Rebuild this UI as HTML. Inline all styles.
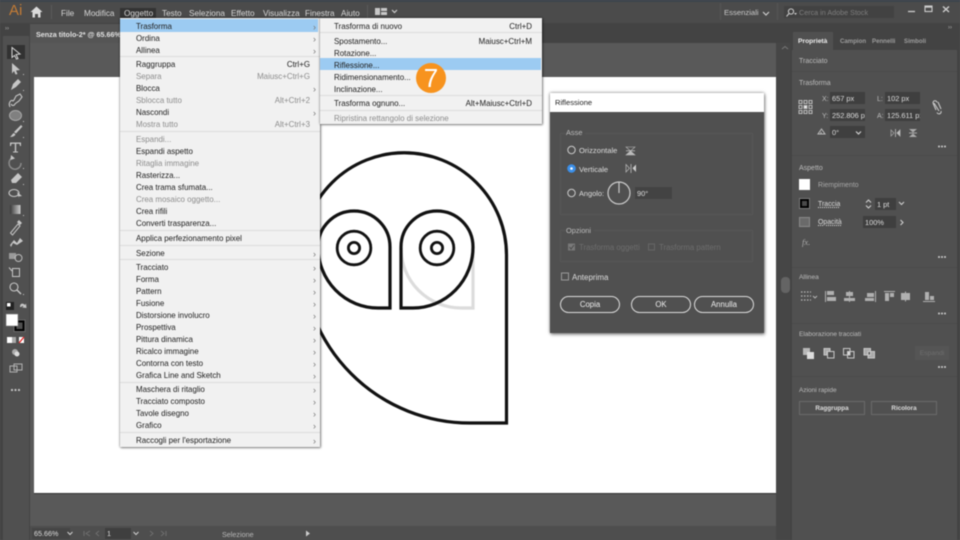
<!DOCTYPE html>
<html lang="it"><head><meta charset="utf-8"><title>Illustrator</title>
<style>
html,body{margin:0;padding:0;background:#535353}
#p{position:relative;width:960px;height:540px;overflow:hidden;background:#595959;font-family:"Liberation Sans",sans-serif;font-size:8.2px;color:#d8d8d8;filter:blur(.4px)}
#p div{position:absolute;white-space:nowrap}
svg{position:absolute;overflow:visible}
.b{line-height:12px;height:12px;margin-top:1px}
.m{left:0;right:0;height:12px;line-height:12px;padding-left:16px;color:#202020;font-size:7.95px;margin-top:1px}
.s .m{padding-left:14px}
.g{color:#8c8c8c!important}
.k{right:10px;top:0}
.a{right:4px;top:0;color:#777;font-size:9px}
.l{left:0;right:0;height:1px;background:#dcdcdc}
.f{background:#3f3f3f;height:12px;line-height:13.5px;padding-left:2px;color:#ddd;overflow:hidden;font-size:7.4px}
.h{color:#bcbcbc;font-size:7px}
.btn{border:1px solid #6a6a6a;height:12px;line-height:13.5px;text-align:center;color:#ddd;font-weight:bold;font-size:6.3px}
.pb{border:1.3px solid #ddd;border-radius:9px;height:15px;line-height:16px;text-align:center;color:#eee;font-size:7.8px}
.sep{left:792px;width:165px;height:1px;background:#4b4b4b}
.d{color:#ddd}
.t{font-weight:bold;color:#9d9d9d;font-size:6.1px}
</style></head><body>
<div id="p">
<!-- chrome -->
<div style="left:0;top:0;width:960px;height:2px;background:#3c444c"></div>
<div style="left:0;top:2px;width:960px;height:21px;background:#4b4b4b"></div>
<div style="left:0;top:23px;width:960px;height:20px;background:#434343"></div>
<div style="left:0;top:23px;width:30px;height:517px;background:#434343"></div>
<div style="left:3px;top:36px;width:26px;height:504px;background:#505050"></div>
<div style="left:30px;top:24px;width:90px;height:19px;background:#555"></div>
<div class="b" style="left:36px;top:28px;font-weight:bold;font-size:7.2px;color:#e2e2e2">Senza titolo-2* @ 65.66%</div>
<div style="left:776px;top:43px;width:14px;height:497px;background:#464646"></div>
<div style="left:790px;top:23px;width:170px;height:517px;background:#434343"></div>
<div style="left:792px;top:32px;width:165px;height:508px;background:#505050"></div>
<div style="left:792px;top:32px;width:165px;height:18px;background:#434343"></div>
<div style="left:793px;top:32px;width:40px;height:18px;background:#505050"></div>
<div style="left:30px;top:526px;width:746px;height:14px;background:#4e4e4e"></div>
<!-- artboard -->
<div style="left:34px;top:77px;width:742px;height:416px;background:#fff;box-shadow:0 1px 0 #333"></div>
<!-- owl -->
<svg style="left:0;top:0" width="960" height="540" fill="none" stroke="#111" stroke-width="3.200">
<path d="M506.500 423H470A168 168 0 0 1 302 255A102.250 102.250 0 0 1 506.500 255Z"/>
<path d="M401 248A60 60 0 0 0 461 308H473V247" stroke="#dcdcdc"/>
<path d="M390 308V247A36 36 0 0 0 318 247A60 61 0 0 0 378 308Z"/>
<path d="M401 308V247A36 36 0 0 1 473 247A60 61 0 0 1 413 308Z"/>
<g stroke-width="2.800"><circle cx="354" cy="248" r="16.800"/><circle cx="354" cy="248" r="5.600"/><circle cx="437" cy="248" r="16.800"/><circle cx="437" cy="248" r="5.600"/></g>
</svg>
<!-- top bar icons -->
<div style="left:9px;top:2px;font-size:15px;color:#c47c35;line-height:18px">Ai</div>
<svg style="left:30px;top:6px" width="13" height="12"><path d="M6.500 .5L.5 6H2.500V11.500H5V8H8V11.500H10.500V6H12.500Z" fill="#dadada"/></svg>
<div style="left:51px;top:5px;width:1px;height:14px;background:#5a5a5a"></div>
<div style="left:120px;top:8px;width:36px;height:10px;background:#333"></div>
<div class="b" style="left:61px;top:7px">File</div>
<div class="b" style="left:84px;top:7px">Modifica</div>
<div class="b" style="left:124px;top:7px">Oggetto</div>
<div class="b" style="left:162px;top:7px">Testo</div>
<div class="b" style="left:189px;top:7px">Seleziona</div>
<div class="b" style="left:231px;top:7px">Effetto</div>
<div class="b" style="left:263px;top:7px">Visualizza</div>
<div class="b" style="left:305px;top:7px">Finestra</div>
<div class="b" style="left:341px;top:7px">Aiuto</div>
<div style="left:367px;top:5px;width:1px;height:14px;background:#5a5a5a"></div>
<svg style="left:375px;top:8px" width="26" height="8"><path d="M0 0H5V7H0ZM6 0H12V3H6ZM6 4H12V7H6Z" fill="#c8c8c8"/><path d="M17 2L19.500 4.500L22 2" fill="none" stroke="#ccc" stroke-width="1.200"/></svg>
<div style="left:720px;top:3px;width:1px;height:17px;background:#565656"></div>
<div class="b" style="left:724px;top:6px;font-size:7.700px;color:#c8c8c8">Essenziali</div>
<svg style="left:762px;top:11px" width="8" height="5"><path d="M1 1L4 4L7 1" fill="none" stroke="#ccc" stroke-width="1.200"/></svg>
<div style="left:777px;top:3px;width:1px;height:17px;background:#565656"></div>
<div style="left:784px;top:6px;width:110px;height:12px;background:#424242"></div>
<svg style="left:786px;top:8px" width="12" height="9" fill="none" stroke="#ccc"><circle cx="5" cy="3.500" r="2.600"/><path d="M3 5.500L.5 8.500"/><path d="M8 5H11L9.500 7Z" fill="#ccc" stroke="none"/></svg>
<div class="b" style="left:799px;top:6px;color:#7e7e7e;font-size:7.200px">Cerca in Adobe Stock</div>
<svg style="left:905px;top:4px" width="50" height="14" fill="none" stroke="#ccc" stroke-width="1.300"><path d="M3 7.500H10"/><rect x="20" y="2" width="7" height="5.500" stroke-width="1.100"/><path d="M20 2.700H27" stroke-width="2"/><path d="M38 2.500L44 8M44 2.500L38 8" stroke-width="1.400"/></svg>
<div style="left:5px;top:26px;font-size:6px;color:#aaa">››</div>
<div style="left:948px;top:25px;font-size:6px;color:#aaa">››</div>
<!-- tools -->
<div style="left:7px;top:45px;width:18px;height:14px;background:#323232"></div>
<svg style="left:0;top:0" width="32" height="400">
<defs><linearGradient id="gr"><stop offset="0" stop-color="#3a3a3a"/><stop offset="1" stop-color="#cfcfcf"/></linearGradient></defs>
<g fill="#c6c6c6" stroke="none">
<path d="M12 47.500L20 54L16 54.500L18 58.500 16.500 59 14.500 55.500 12 57.500Z" fill="none" stroke="#d8d8d8" stroke-width="1"/>
<path d="M12 63L20 70L16 70.500L17.500 74 15.500 74.500 14 71 12 73.500Z"/>
<path d="M11 90L13 84 18 79 21 82 16 87Z"/>
<path d="M10 107C8 103 11 99 13 101L14 100 16 96 20 94 22 97 19 101 16 103 15 104C14 106 12 106 11 104" fill="none" stroke="#c6c6c6" stroke-width="1.100"/>
<ellipse cx="15.500" cy="115.500" rx="6" ry="5" fill="#808080" stroke="#a8a8a8" stroke-width="1"/>
<path d="M21 125L22.500 126.500 16 133.500 14 132ZM14 133L15.500 134.500C14.500 136.500 12 137 10 137C11.500 136 12 134 14 133Z"/>
<path d="M10 142.500H21V146H20L19.500 143.700H16.200V151.500H18V152.500H13V151.500H14.800V143.700H11.500L11 146H10Z"/>
<path d="M21 163A6 6 0 1 1 12 158" fill="none" stroke="#8a8a8a" stroke-width="1.500"/><path d="M11 155L15 158.500 10.500 160Z"/>
<path d="M11 180L18 173 22 177 16 183H12Z"/>
<ellipse cx="14" cy="193" rx="5" ry="3.500" fill="none" stroke="#c6c6c6" stroke-width="1.100"/><path d="M17 192L22 196 18.500 196.500 19 199Z"/>
<rect x="10" y="205" width="10.500" height="9" fill="url(#gr)"/>
<path d="M10.500 233L18 224 20 226 12.500 235Z" fill="none" stroke="#c6c6c6"/><path d="M17 222L19 220 22 223 20 225Z"/>
<path d="M10 245L14 240 17 243 20 238 23 241 17 245 13 243 11 247Z"/>
<rect x="9" y="253" width="7" height="6" fill="#9a9a9a"/><circle cx="18.500" cy="258" r="3.500" fill="none" stroke="#bbb"/>
<path d="M12 268H20V277H12ZM13 269V276H19V269Z"/><path d="M9 267.500L12 271" stroke="#c6c6c6"/>
<circle cx="14" cy="287" r="4" fill="none" stroke="#c6c6c6" stroke-width="1.100"/><path d="M17 290L21 294" stroke="#c6c6c6" stroke-width="1.500"/>
<path d="M23 74h1v1h-1zM23 90h1v1h-1zM23 121h1v1h-1zM23 137h1v1h-1zM23 168h1v1h-1zM23 184h1v1h-1zM23 215h1v1h-1zM23 294h1v1h-1z"/>
<rect x="6" y="302" width="8" height="8" fill="#222" /><rect x="7" y="303" width="3.500" height="3.500" fill="#fff"/>
<path d="M20 307C20 303 23 303 25 305L26 303.500 26.500 308 22 307.500 23.500 306.500C22.500 305.500 21.500 306 21.500 307Z"/>
<rect x="14" y="320" width="11" height="11.500" fill="#000" stroke="#777" stroke-width=".8"/><rect x="16.500" y="322.500" width="6" height="6.500" fill="#4f4f4f"/>
<rect x="6" y="314" width="12" height="12" fill="#fff" stroke="#777" stroke-width=".6"/>
<rect x="7" y="337" width="5" height="6" fill="#fff"/><rect x="12" y="337" width="4" height="6" fill="#aaa"/>
<rect x="19" y="337" width="5" height="6" fill="#fff"/><path d="M19 343L24 337" stroke="#e02020" stroke-width="1.300"/>
<circle cx="15" cy="352" r="3" fill="#aaa"/><circle cx="17" cy="354" r="2.500" fill="#ddd"/>
<path d="M10 366h7v6h-7zM14 364h8v6h-8z" fill="none" stroke="#b0b0b0"/>
<circle cx="12" cy="390" r="1.100"/><circle cx="15.500" cy="390" r="1.100"/><circle cx="19" cy="390" r="1.100"/>
</g></svg>
<!-- status bar -->
<div class="f" style="left:32px;top:528px;width:36px;height:11px;line-height:12.500px;font-size:7.200px;background:#454545">65.66%</div>
<svg style="left:66px;top:530px" width="110" height="8" fill="none" stroke="#cfcfcf"><path d="M1.500 2L4 4.500 6.500 2"/><path d="M18 1V6M24 1L20 3.500 24 6" stroke="#6e6e6e"/><path d="M33 1L30 3.500 33 6" stroke="#6e6e6e"/><path d="M67.500 2L70 4.500 72.500 2"/><path d="M84 1L87 3.500 84 6M95 1L98 3.500 95 6M100 1V6" stroke="#6e6e6e"/></svg>
<div class="f" style="left:105px;top:528px;width:24px;height:11px;line-height:12.500px;font-size:7.200px">1</div>
<div class="b" style="left:222px;top:528px;color:#b8b8b8;font-size:7.200px;line-height:11px">Selezione</div>
<svg style="left:305px;top:530px" width="6" height="7"><path d="M1 .5L5 3.500 1 6.500Z" fill="#ccc"/></svg>
<!-- right panel -->
<div class="b" style="left:798px;top:35px;font-weight:bold;color:#eee;font-size:6.700px">Proprietà</div>
<div class="b t" style="left:840px;top:35px">Campion</div>
<div class="b t" style="left:872px;top:35px">Pennelli</div>
<div class="b t" style="left:904px;top:35px">Simboli</div>
<div class="b h" style="left:799px;top:55px">Tracciato</div>
<div class="sep" style="top:71px"></div>
<div class="b h" style="left:799px;top:77px">Trasforma</div>
<div class="b h" style="left:822px;top:93px">X:</div><div class="f" style="left:830px;top:92px;width:33px">657 px</div>
<div class="b h" style="left:822px;top:110px">Y:</div><div class="f" style="left:830px;top:109px;width:33px">252.806 px</div>
<div class="b h" style="left:877px;top:93px">L:</div><div class="f" style="left:885px;top:92px;width:33px">102 px</div>
<div class="b h" style="left:877px;top:110px">A:</div><div class="f" style="left:885px;top:109px;width:33px">125.611 px</div>
<div class="f" style="left:830px;top:126px;width:21px">0°</div><div class="f" style="left:853px;top:126px;width:10px"></div>
<svg style="left:0;top:0" width="960" height="540" fill="none" stroke="#cfcfcf">
<g stroke-width="1" stroke="#bbb"><rect x="799" y="100.500" width="3" height="3"/><rect x="804" y="100.500" width="3" height="3"/><rect x="809" y="100.500" width="3" height="3"/><rect x="799" y="105.500" width="3" height="3"/><rect x="804" y="105.500" width="3" height="3" fill="#eee"/><rect x="809" y="105.500" width="3" height="3"/><rect x="799" y="110.500" width="3" height="3"/><rect x="804" y="110.500" width="3" height="3"/><rect x="809" y="110.500" width="3" height="3"/></g>
<path d="M934 103L939 111M933 103A2 2 0 0 1 937 102.500M941 111A2 2 0 0 1 937 112.500M933 103L936 110M938 102L941 109" stroke-width="1"/>
<path d="M818 134H825L821.500 129ZM821 134V132" stroke="#bbb"/><path d="M856 131.500L858.500 134 861 131.500" stroke-width="1.200"/>
<path d="M891 130V136L894 133Z" stroke="#aaa" stroke-width=".7"/><path d="M900 130V136L897 133Z" fill="#bbb" stroke="#bbb" stroke-width=".7"/><path d="M895.500 129V137" stroke-width=".7"/>
<path d="M909 129H917L913 132.500ZM909 137H917L913 133.500Z" fill="#aaa" stroke="none"/><path d="M909 133H917" stroke-width=".7"/>
<g fill="#ccc" stroke="none"><circle cx="939" cy="146.500" r="1"/><circle cx="942" cy="146.500" r="1"/><circle cx="945" cy="146.500" r="1"/><circle cx="939" cy="257" r="1"/><circle cx="942" cy="257" r="1"/><circle cx="945" cy="257" r="1"/><circle cx="939" cy="313.500" r="1"/><circle cx="942" cy="313.500" r="1"/><circle cx="945" cy="313.500" r="1"/><circle cx="939" cy="367" r="1"/><circle cx="942" cy="367" r="1"/><circle cx="945" cy="367" r="1"/></g>
<!-- swatches -->
<rect x="799" y="179" width="11" height="11" fill="#fff" stroke="none"/>
<rect x="799.500" y="198.500" width="10" height="10" fill="#000" stroke="#7a7a7a"/><rect x="802" y="201" width="5" height="5" fill="#4a4a4a" stroke="none"/>
<rect x="799.500" y="217.500" width="10" height="9" fill="#6a6a6a" stroke="#8a8a8a"/>
<path d="M866 202.500L868.500 200 871 202.500M866 205.500L868.500 208 871 205.500" stroke-width="1.100"/>
<path d="M899 202L901.500 204.500 904 202" stroke-width="1.100"/><path d="M900.500 220L903 222.500 900.500 225" stroke-width="1.100"/>
<!-- align -->
<g stroke="#b8b8b8" stroke-width="1.200" stroke-dasharray="1.500 1.500"><path d="M801 292H811M801 296H811M801 300H811"/></g>
<path d="M813 296L815 298 817 296" stroke-width=".9" stroke="#bbb"/>
<g fill="#b0b0b0" stroke="none">
<path d="M825 291H826V302H825ZM827 291H834V295H827ZM827 297H836V301H827Z"/>
<path d="M849 291H850V302H849ZM846 292H853V296H846ZM844 298H855V301H844Z"/>
<path d="M875 291H876V302H875ZM867 293H874V297H867ZM865 298H874V301H865Z"/>
<path d="M884 291H895V292H884ZM885 293H889V301H885ZM890 293H894V297H890Z"/>
<path d="M905 291.500H906V301.500H905ZM906 293H910V300H906ZM905 293H901V300H905Z"/>
<path d="M923 301H935V302H923ZM925 292H929V300H925ZM930 296H934V300H930Z"/>
</g>
<!-- pathfinder -->
<g fill="#b8b8b8" stroke="none"><rect x="803" y="348" width="7" height="7"/><rect x="807" y="352" width="7" height="7" fill="#ddd"/></g>
<g stroke="#c8c8c8" stroke-width="1"><path d="M824 348.500H830V351.500H827V355H824Z" fill="#aaa"/><rect x="827.500" y="351.500" width="6.500" height="6.500"/>
<rect x="843.500" y="348.500" width="6.500" height="6.500"/><rect x="847.500" y="351.500" width="6.500" height="6.500"/><rect x="847.500" y="351.500" width="2.500" height="3.500" fill="#ddd"/>
<rect x="864" y="348.500" width="6.500" height="6.500" fill="#aaa"/><rect x="868" y="351.500" width="6.500" height="6.500" fill="#aaa"/><rect x="868" y="351.500" width="2.500" height="3.500" fill="#505050"/></g>
<path d="M782 49L785 46.500 788 49" stroke="#777" stroke-width="1"/>
</svg>
<div class="sep" style="top:155px"></div>
<div class="b h" style="left:799px;top:162px">Aspetto</div>
<div class="b" style="left:818px;top:179px;font-size:6.900px;color:#a8a8a8">Riempimento</div>
<div class="b d" style="left:818px;top:198px;font-size:6.900px;text-decoration:underline dotted">Traccia</div>
<div class="b d" style="left:818px;top:216px;font-size:6.900px;text-decoration:underline dotted">Opacità</div>
<div class="b" style="left:802px;top:235px;font-family:'Liberation Serif',serif;font-style:italic;font-size:8.500px;color:#aaa">fx.</div>
<div class="f" style="left:875px;top:198px;width:19px">1 pt</div>
<div class="f" style="left:863px;top:216px;width:31px">100%</div>
<div class="sep" style="top:267px"></div>
<div class="b h" style="left:799px;top:271px;font-size:6.600px">Allinea</div>
<div class="sep" style="top:323px"></div>
<div class="b h" style="left:799px;top:328px;font-size:6.500px">Elaborazione tracciati</div>
<div style="left:915px;top:346px;width:34px;height:14px;line-height:15px;text-align:center;background:#555;color:#6e6e6e;font-size:6.800px">Espandi</div>
<div class="sep" style="top:376px"></div>
<div class="b h" style="left:799px;top:384px;font-size:6.500px">Azioni rapide</div>
<div class="btn" style="left:799px;top:401px;width:64px">Raggruppa</div>
<div class="btn" style="left:871px;top:401px;width:64px">Ricolora</div>
<div style="left:781px;top:277px;width:9px;height:16px;border-radius:4px;background:#646464"></div>
<!-- dialog -->
<div style="left:550px;top:93px;width:214px;height:240px;background:#505050;box-shadow:0 0 3px rgba(0,0,0,.55),1px 2px 3px rgba(0,0,0,.3)">
<div style="left:0;top:0;width:214px;height:19px;background:#fff;color:#222;line-height:20px;font-size:7.600px;text-indent:5px">Riflessione</div>
<div style="left:10px;top:40px;width:191px;height:80px;border:1px solid #575757"></div>
<div style="left:10px;top:137px;width:191px;height:30px;border:1px solid #575757"></div>
<div class="b h" style="left:16px;top:33px;background:#505050;padding-right:3px;font-size:7.400px">Asse</div>
<div class="b d" style="left:29px;top:51px;font-size:7.600px">Orizzontale</div>
<div class="b d" style="left:29px;top:69.500px;font-size:7.600px">Verticale</div>
<div class="b d" style="left:29px;top:94px;font-size:7.400px">Angolo:</div>
<div class="f" style="left:85px;top:94px;width:35px;padding-left:2px;background:#434343">90°</div>
<div class="b h" style="left:16px;top:131px;background:#505050;padding-right:3px;font-size:7.400px">Opzioni</div>
<div class="b" style="left:29px;top:148px;color:#6d6d6d;font-size:7.800px">Trasforma oggetti</div>
<div class="b" style="left:109px;top:148px;color:#6d6d6d;font-size:7.800px">Trasforma pattern</div>
<div class="b d" style="left:22px;top:178px;font-size:8px">Anteprima</div>
<div class="pb" style="left:10px;top:203px;width:58px">Copia</div>
<div class="pb" style="left:81px;top:203px;width:58px;border-width:1.800px;height:14.500px">OK</div>
<div class="pb" style="left:144px;top:203px;width:58px">Annulla</div>
<svg style="left:0;top:0" width="214" height="240" fill="none" stroke="#ccc">
<circle cx="21.500" cy="57" r="3.700"/>
<circle cx="21.500" cy="75.500" r="3.800" fill="#3c8fe8" stroke="#3c8fe8"/><circle cx="21.500" cy="75.500" r="1.300" fill="#fff" stroke="none"/>
<circle cx="21.500" cy="100" r="3.700"/>
<circle cx="69" cy="100" r="11" stroke-width="1.200"/><path d="M69 89V100" stroke-width="1.200"/>
<path d="M76 54H85L80.500 58Z" stroke="#bbb" stroke-width=".6"/><path d="M76 62H85L80.500 58Z" fill="#bbb" stroke="#bbb" stroke-width=".6"/><path d="M76 57.800H85" stroke-width=".7"/>
<path d="M76 71.500V79L79.500 75.200Z" stroke="#bbb" stroke-width=".7"/><path d="M86 71.500V79L82.500 75.200Z" fill="#ccc" stroke="none"/><path d="M81 71V80" stroke-width=".7"/>
<rect x="18.500" y="151" width="6" height="6" fill="#7a7a7a" stroke="#777"/><path d="M19.500 154L21 156 24 152" stroke="#4a4a4a"/>
<rect x="98.500" y="151" width="6" height="6" stroke="#666"/>
<rect x="11.500" y="180" width="7" height="7" stroke="#999"/>
</svg>
</div>
<!-- menu 1 -->
<div style="left:120px;top:18px;width:200px;height:429px;background:#f1f1f1;box-shadow:0 0 2px rgba(0,0,0,.6),1px 1px 2px rgba(0,0,0,.35)">
<div style="left:0;top:1px;width:198px;height:12.500px;background:#9ccbf2"></div>
<div class="m" style="top:1.500px">Trasforma<span class="a" style="position:absolute">›</span></div>
<div class="m" style="top:13.500px">Ordina<span class="a" style="position:absolute">›</span></div>
<div class="m" style="top:25.500px">Allinea<span class="a" style="position:absolute">›</span></div>
<div class="l" style="top:38px"></div>
<div class="m" style="top:40px">Raggruppa<span class="k" style="position:absolute">Ctrl+G</span></div>
<div class="m g" style="top:52px">Separa<span class="k" style="position:absolute">Maiusc+Ctrl+G</span></div>
<div class="m" style="top:64px">Blocca<span class="a" style="position:absolute">›</span></div>
<div class="m g" style="top:76px">Sblocca tutto<span class="k" style="position:absolute">Alt+Ctrl+2</span></div>
<div class="m" style="top:88px">Nascondi<span class="a" style="position:absolute">›</span></div>
<div class="m g" style="top:100px">Mostra tutto<span class="k" style="position:absolute">Alt+Ctrl+3</span></div>
<div class="l" style="top:113px"></div>
<div class="m g" style="top:115px">Espandi...</div>
<div class="m" style="top:127px">Espandi aspetto</div>
<div class="m g" style="top:139px">Ritaglia immagine</div>
<div class="m" style="top:151px">Rasterizza...</div>
<div class="m" style="top:163px">Crea trama sfumata...</div>
<div class="m g" style="top:175px">Crea mosaico oggetto...</div>
<div class="m" style="top:187px">Crea rifili</div>
<div class="m" style="top:199px">Converti trasparenza...</div>
<div class="l" style="top:212px"></div>
<div class="m" style="top:214px">Applica perfezionamento pixel</div>
<div class="l" style="top:227px"></div>
<div class="m" style="top:228.500px">Sezione<span class="a" style="position:absolute">›</span></div>
<div class="l" style="top:241px"></div>
<div class="m" style="top:243px">Tracciato<span class="a" style="position:absolute">›</span></div>
<div class="m" style="top:255px">Forma<span class="a" style="position:absolute">›</span></div>
<div class="m" style="top:267px">Pattern<span class="a" style="position:absolute">›</span></div>
<div class="m" style="top:279px">Fusione<span class="a" style="position:absolute">›</span></div>
<div class="m" style="top:291px">Distorsione involucro<span class="a" style="position:absolute">›</span></div>
<div class="m" style="top:303px">Prospettiva<span class="a" style="position:absolute">›</span></div>
<div class="m" style="top:315px">Pittura dinamica<span class="a" style="position:absolute">›</span></div>
<div class="m" style="top:327px">Ricalco immagine<span class="a" style="position:absolute">›</span></div>
<div class="m" style="top:339px">Contorna con testo<span class="a" style="position:absolute">›</span></div>
<div class="m" style="top:351px">Grafica Line and Sketch<span class="a" style="position:absolute">›</span></div>
<div class="l" style="top:364px"></div>
<div class="m" style="top:365px">Maschera di ritaglio<span class="a" style="position:absolute">›</span></div>
<div class="m" style="top:377px">Tracciato composto<span class="a" style="position:absolute">›</span></div>
<div class="m" style="top:389px">Tavole disegno<span class="a" style="position:absolute">›</span></div>
<div class="m" style="top:401px">Grafico<span class="a" style="position:absolute">›</span></div>
<div class="l" style="top:414px"></div>
<div class="m" style="top:416px">Raccogli per l'esportazione<span class="a" style="position:absolute">›</span></div>
</div>
<!-- submenu -->
<div class="s" style="left:320px;top:18px;width:222px;height:106px;background:#f1f1f1;box-shadow:0 0 2px rgba(0,0,0,.6),1px 1px 2px rgba(0,0,0,.35)">
<div style="left:0;top:40px;width:221px;height:12px;background:#9ccbf2"></div>
<div class="m" style="top:1.500px">Trasforma di nuovo<span class="k" style="position:absolute">Ctrl+D</span></div>
<div class="l" style="top:14px"></div>
<div class="m" style="top:16.500px">Spostamento...<span class="k" style="position:absolute">Maiusc+Ctrl+M</span></div>
<div class="m" style="top:28.500px">Rotazione...</div>
<div class="m" style="top:40.500px">Riflessione...</div>
<div class="m" style="top:52.500px">Ridimensionamento...</div>
<div class="m" style="top:64.500px">Inclinazione...</div>
<div class="l" style="top:77px"></div>
<div class="m" style="top:79px">Trasforma ognuno...<span class="k" style="position:absolute">Alt+Maiusc+Ctrl+D</span></div>
<div class="l" style="top:92px"></div>
<div class="m g" style="top:93.500px">Ripristina rettangolo di selezione</div>
</div>
<!-- badge -->
<div style="left:416px;top:63px;width:30px;height:30px;border-radius:50%;background:#f7931e;color:#fff;text-align:center;font-size:26px;line-height:31px">7</div>
</div>
</body></html>
